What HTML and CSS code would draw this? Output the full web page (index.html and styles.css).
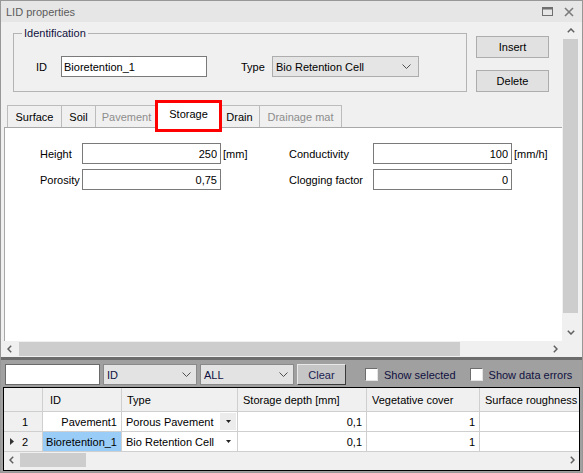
FILE: index.html
```html
<!DOCTYPE html>
<html lang="en">
<head>
  <meta charset="UTF-8" />
  <title>LID properties</title>
  <link rel="stylesheet" href="styles.css">
</head>
<body>
  <div class="window">
    <!-- Title bar -->
    <div class="titlebar">
      <span class="title-text">LID properties</span>
      <span class="title-icons">
        <svg width="11" height="9" viewBox="0 0 11 9"><rect x="0.5" y="0.5" width="10" height="8" fill="none" stroke="#6f6f6f"/><rect x="0" y="0" width="11" height="2.5" fill="#6f6f6f"/></svg>
        <svg width="10" height="10" viewBox="0 0 10 10"><path d="M1 1L9 9M9 1L1 9" stroke="#7b7b7b" stroke-width="1.6"/></svg>
      </span>
    </div>

    <!-- Upper editor area -->
    <div class="upper">
      <div class="viewport">
        <div class="head-row">
          <fieldset class="group">
            <legend>Identification</legend>
            <div class="group-row">
              <label class="lbl-id">ID</label>
              <input class="textbox id-box" value="Bioretention_1" readonly>
              <label class="lbl-type">Type</label>
              <div class="combo type-combo">
                <span>Bio Retention Cell</span>
                <svg width="9" height="5" viewBox="0 0 9 5"><path d="M0.5 0.5L4.5 4.5L8.5 0.5" fill="none" stroke="#505050"/></svg>
              </div>
            </div>
          </fieldset>
          <div class="side-buttons">
            <button class="btn">Insert</button>
            <button class="btn">Delete</button>
          </div>
        </div>

        <div class="tabs">
          <div class="tab tab-surface">Surface</div>
          <div class="tab tab-soil">Soil</div>
          <div class="tab tab-pavement disabled">Pavement</div>
          <div class="tab tab-storage active">Storage<span class="highlight"></span></div>
          <div class="tab tab-drain">Drain</div>
          <div class="tab tab-mat disabled">Drainage mat</div>
        </div>

        <div class="panel">
          <div class="props">
            <span>Height</span><input class="pval" value="250" readonly><span class="unit">[mm]</span>
            <span>Conductivity</span><input class="pval" value="100" readonly><span class="unit">[mm/h]</span>
            <span>Porosity</span><input class="pval" value="0,75" readonly><span class="unit"></span>
            <span>Clogging factor</span><input class="pval" value="0" readonly><span class="unit"></span>
          </div>
        </div>
      </div>

      <div class="vscroll">
        <div class="sb-btn"><svg width="8" height="5" viewBox="0 0 8 5"><path d="M0.8 4.2L4 1L7.2 4.2" fill="none" stroke="#606060" stroke-width="1.5"/></svg></div>
        <div class="vthumb"></div>
        <div class="sb-rest"></div>
        <div class="sb-btn"><svg width="8" height="5" viewBox="0 0 8 5"><path d="M0.8 0.8L4 4L7.2 0.8" fill="none" stroke="#606060" stroke-width="1.5"/></svg></div>
      </div>

      <div class="hscroll">
        <div class="sb-btn hbtn-left"><svg width="5" height="8" viewBox="0 0 5 8"><path d="M4.2 0.8L1 4L4.2 7.2" fill="none" stroke="#606060" stroke-width="1.5"/></svg></div>
        <div class="hthumb"></div>
        <div class="sb-rest"></div>
        <div class="sb-btn hbtn-right"><svg width="5" height="8" viewBox="0 0 5 8"><path d="M0.8 0.8L4 4L0.8 7.2" fill="none" stroke="#606060" stroke-width="1.5"/></svg></div>
      </div>
      <div class="sb-corner"></div>
    </div>

    <div class="splitter"></div>

    <!-- Filter bar -->
    <div class="filterbar">
      <input class="filter-box" value="" readonly>
      <div class="combo filter-combo">
        <span>ID</span>
        <svg width="9" height="5" viewBox="0 0 9 5"><path d="M0.5 0.5L4.5 4.5L8.5 0.5" fill="none" stroke="#505050"/></svg>
      </div>
      <div class="combo filter-combo">
        <span>ALL</span>
        <svg width="9" height="5" viewBox="0 0 9 5"><path d="M0.5 0.5L4.5 4.5L8.5 0.5" fill="none" stroke="#505050"/></svg>
      </div>
      <button class="btn-clear">Clear</button>
      <label class="check check-first"><span class="box"></span>Show selected</label>
      <label class="check"><span class="box"></span>Show data errors</label>
    </div>

    <!-- Data grid -->
    <div class="grid">
      <div class="grid-cells">
        <div class="gh"></div>
        <div class="gh">ID</div>
        <div class="gh">Type</div>
        <div class="gh">Storage depth [mm]</div>
        <div class="gh">Vegetative cover</div>
        <div class="gh">Surface roughness</div>

        <div class="rh"><span class="marker"></span>1</div>
        <div class="gc num">Pavement1</div>
        <div class="gc combo-cell"><span>Porous Pavement</span><span class="drop drop-box"><svg width="5" height="3" viewBox="0 0 5 3"><path d="M0 0H5L2.5 3Z" fill="#222"/></svg></span></div>
        <div class="gc num">0,1</div>
        <div class="gc num">1</div>
        <div class="gc"></div>

        <div class="rh"><span class="marker"><svg width="4" height="7" viewBox="0 0 4 7"><path d="M0 0L4 3.5L0 7Z" fill="#333"/></svg></span>2</div>
        <div class="gc num selected">Bioretention_1</div>
        <div class="gc combo-cell"><span>Bio Retention Cell</span><span class="drop"><svg width="5" height="3" viewBox="0 0 5 3"><path d="M0 0H5L2.5 3Z" fill="#222"/></svg></span></div>
        <div class="gc num">0,1</div>
        <div class="gc num">1</div>
        <div class="gc"></div>
      </div>
      <div class="grid-hscroll">
        <div class="sb-btn gbtn-left"><svg width="5" height="8" viewBox="0 0 5 8"><path d="M4.2 0.8L1 4L4.2 7.2" fill="none" stroke="#606060" stroke-width="1.5"/></svg></div>
        <div class="gthumb"></div>
        <div class="sb-rest"></div>
        <div class="sb-btn gbtn-right"><svg width="5" height="8" viewBox="0 0 5 8"><path d="M0.8 0.8L4 4L0.8 7.2" fill="none" stroke="#606060" stroke-width="1.5"/></svg></div>
      </div>
    </div>
  </div>
</body>
</html>
```

FILE: styles.css
```css
* {
  box-sizing: border-box;
  margin: 0;
  padding: 0;
}
html, body {
  height: 100%;
}
body {
  font-family: "Liberation Sans", Arial, sans-serif;
  font-size: 11px;
  color: #000;
  background: #fff;
  overflow: hidden;
}
input, button {
  font: inherit;
  color: inherit;
  outline: none;
}
svg {
  display: block;
}

.window {
  width: 583px;
  height: 473px;
  border: 1px solid #979797;
  background: #a0a0a0;
  display: flex;
  flex-direction: column;
  overflow: hidden;
}

/* title */
.titlebar {
  flex: none;
  height: 21px;
  background: #e6e6e6;
  display: flex;
  align-items: center;
  justify-content: space-between;
  padding: 0 8px 0 5px;
  color: #5c5c5c;
}
.title-icons {
  display: flex;
  align-items: center;
  gap: 11px;
}

/* upper area */
.upper {
  flex: none;
  display: grid;
  grid-template-columns: 561px 17px;
  grid-template-rows: 319px 16px;
  padding-right: 3px;
  background: #f0f0f0;
}
.viewport {
  display: flex;
  flex-direction: column;
  overflow: hidden;
}
.head-row {
  flex: none;
  display: flex;
  align-items: flex-start;
  padding-left: 12px;
}
.group {
  width: 454px;
  margin-top: 5px;
  border: 1px solid #b4b4b4;
}
.group legend {
  margin-left: 8px;
  padding: 0 2px;
  line-height: 13px;
  color: #101040;
}
.group-row {
  display: flex;
  align-items: center;
  padding: 16px 0 14px 22px;
}
.lbl-id {
  width: 25px;
}
.textbox {
  height: 21px;
  border: 1px solid #7a7a7a;
  background: #fff;
  padding: 0 2px;
}
.id-box {
  width: 146px;
}
.lbl-type {
  width: 31px;
  margin-left: 34px;
}
.combo {
  display: flex;
  align-items: center;
  justify-content: space-between;
  height: 21px;
  background: #e5e5e5;
  border: 1px solid #adadad;
  padding: 0 7px 0 3px;
}
.type-combo {
  width: 147px;
}
.side-buttons {
  display: flex;
  flex-direction: column;
  gap: 12px;
  margin: 14px 0 0 9px;
}
.btn {
  width: 73px;
  height: 22px;
  background: #e1e1e1;
  border: 1px solid #adadad;
}

/* tabs */
.tabs {
  flex: none;
  display: flex;
  align-items: flex-end;
  height: 25px;
  margin-top: 10px;
  padding-left: 6px;
}
.tab {
  height: 22px;
  display: flex;
  align-items: center;
  justify-content: center;
  border: 1px solid #bcbcbc;
  border-bottom: none;
  background: #f0f0f0;
  margin-left: -1px;
}
.tab:first-child {
  margin-left: 0;
}
.tab.disabled {
  color: #8d8d8d;
}
.tab-surface { width: 55px; }
.tab-soil { width: 35px; }
.tab-pavement { width: 63px; }
.tab-storage { width: 63px; }
.tab-drain { width: 41px; }
.tab-mat { width: 83px; }
.tab.active {
  position: relative;
  height: 26px;
  margin-bottom: -1px;
  background: #fff;
  padding-bottom: 3px;
  z-index: 1;
}
.highlight {
  position: absolute;
  top: -3px;
  left: -3px;
  right: -3px;
  bottom: -4px;
  border: 3px solid #f00;
}

.panel {
  flex: 1;
  margin-left: 3px;
  background: #fff;
  border-top: 1px solid #a8a8a8;
  border-left: 1px solid #a8a8a8;
  padding: 15px 0 0 35px;
}
.props {
  display: grid;
  grid-template-columns: 42px 139px 68px 84px 139px auto;
  grid-auto-rows: 21px;
  row-gap: 5px;
  align-items: center;
}
.pval {
  width: 100%;
  height: 21px;
  border: 1px solid #7a7a7a;
  text-align: right;
  padding: 0 3px;
  background: #fff;
}
.unit {
  padding-left: 2px;
}

/* scrollbars */
.vscroll {
  display: flex;
  flex-direction: column;
  background: #f0f0f0;
}
.sb-btn {
  flex: none;
  width: 17px;
  height: 17px;
  display: flex;
  align-items: center;
  justify-content: center;
}
.sb-rest {
  flex: 1;
}
.vthumb {
  height: 274px;
  margin: 0 1px;
  background: #cdcdcd;
}
.hscroll {
  display: flex;
  background: #f0f0f0;
}
.hscroll .sb-btn {
  height: 16px;
}
.hthumb {
  width: 441px;
  margin: 1px 0 1px 1px;
  background: #cdcdcd;
}
.hbtn-right {
  justify-content: flex-end;
  padding-right: 4px;
}
.sb-corner {
  background: #f0f0f0;
}

.splitter {
  flex: none;
  height: 3px;
  background: #6c6c6c;
}

/* filter bar */
.filterbar {
  flex: none;
  height: 27px;
  display: flex;
  align-items: flex-start;
  padding: 4px 0 0 4px;
}
.filter-box {
  width: 95px;
  height: 21px;
  border: 1px solid #6a6a6a;
  background: #fff;
}
.filter-combo {
  width: 94px;
  margin-left: 3px;
  background: #e3e3e3;
  border-color: #8a8a8a;
  color: #101040;
  padding-right: 5px;
}
.btn-clear {
  width: 49px;
  height: 21px;
  margin-left: 3px;
  background: #c6c6c6;
  border: 1px solid;
  border-color: #e8e8e8 #3a3a3a #3a3a3a #e8e8e8;
  color: #202050;
}
.check {
  display: flex;
  align-items: center;
  height: 21px;
  margin-left: 14px;
  color: #101040;
}
.check-first {
  margin-left: 19px;
}
.check .box {
  width: 13px;
  height: 13px;
  margin-right: 6px;
  background: #fff;
  border: 1px solid;
  border-color: #6d6d6d #e4e4e4 #e4e4e4 #6d6d6d;
}

/* data grid */
.grid {
  flex: none;
  height: 84px;
  margin: 0 2px 1px;
  border: 1px solid #000;
  background: #f0f0f0;
  display: flex;
  flex-direction: column;
}
.grid-cells {
  display: grid;
  grid-template-columns: 38px 78px 115px 128px 112px 1fr;
  grid-template-rows: 23px 19px 19px;
  gap: 1px;
  background: #cfcfcf;
  border-bottom: 1px solid #cfcfcf;
}
.gh {
  background: #f0f0f0;
  display: flex;
  align-items: center;
  padding: 0 5px;
  white-space: nowrap;
  overflow: hidden;
}
.gh:nth-child(2) {
  padding-left: 7px;
}
.rh {
  background: #f0f0f0;
  display: flex;
  align-items: center;
  padding-left: 6px;
}
.marker {
  width: 12px;
  display: flex;
  align-items: center;
}
.gc {
  background: #fff;
  display: flex;
  align-items: center;
  padding: 0 4px;
  white-space: nowrap;
  overflow: hidden;
}
.gc.num {
  justify-content: flex-end;
}
.gc.selected {
  background: #99cdf7;
}
.combo-cell {
  justify-content: space-between;
  padding-right: 1px;
}
.drop {
  width: 16px;
  height: 17px;
  display: flex;
  align-items: center;
  justify-content: center;
}
.drop-box {
  background: #ececec;
}
.grid-hscroll {
  display: flex;
  height: 16px;
}
.grid-hscroll .sb-btn {
  height: 16px;
  width: 15px;
}
.gthumb {
  width: 66px;
  margin: 1px 0 1px 1px;
  background: #cdcdcd;
}
.gbtn-right {
  justify-content: flex-end;
  padding-right: 4px;
}
```
